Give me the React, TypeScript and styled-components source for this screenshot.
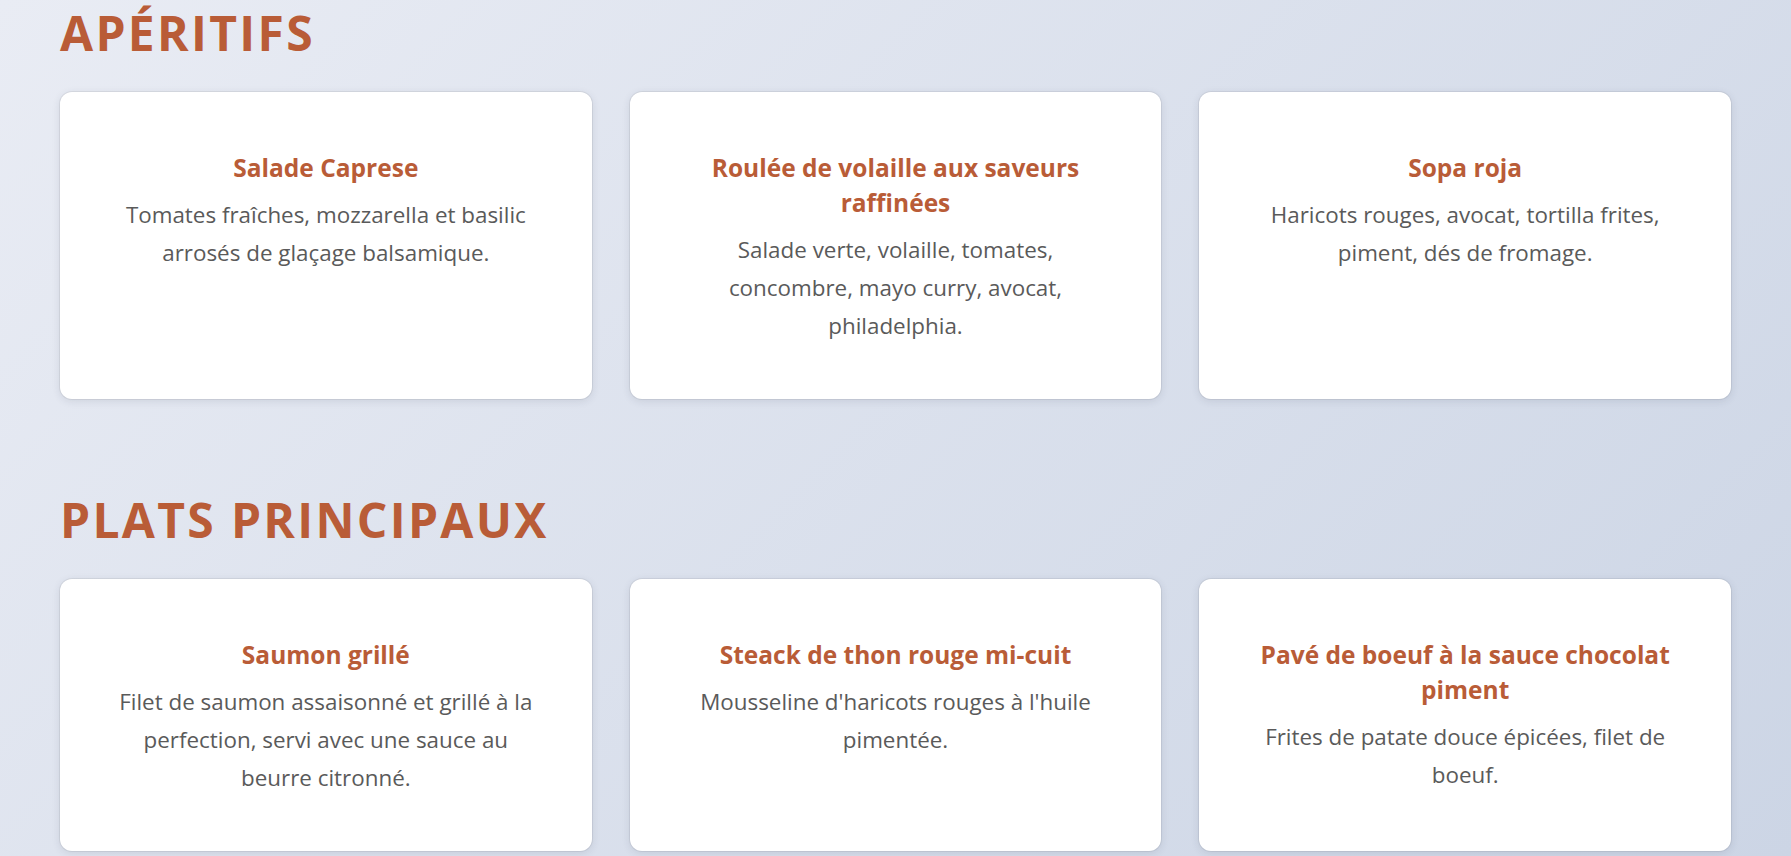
import styled, { createGlobalStyle } from "styled-components";

type Dish = {
    name: string;
    description: string;
};

type Section = {
    title: string;
    dishes: Dish[];
};

const menu: Section[] = [
    {
        title: "Apéritifs",
        dishes: [
            {
                name: "Salade Caprese",
                description: "Tomates fraîches, mozzarella et basilic arrosés de glaçage balsamique.",
            },
            {
                name: "Roulée de volaille aux saveurs raffinées",
                description: "Salade verte, volaille, tomates, concombre, mayo curry, avocat, philadelphia.",
            },
            {
                name: "Sopa roja",
                description: "Haricots rouges, avocat, tortilla frites, piment, dés de fromage.",
            },
        ],
    },
    {
        title: "Plats principaux",
        dishes: [
            {
                name: "Saumon grillé",
                description:
                    "Filet de saumon assaisonné et grillé à la perfection, servi avec une sauce au beurre citronné.",
            },
            {
                name: "Steack de thon rouge mi-cuit",
                description: "Mousseline d'haricots rouges à l'huile pimentée.",
            },
            {
                name: "Pavé de boeuf à la sauce chocolat piment",
                description: "Frites de patate douce épicées, filet de boeuf.",
            },
        ],
    },
];

const App = () => {
    return (
        <>
            <GlobalStyle />
            <StyledPage>
                {menu.map((section) => (
                    <StyledSection key={section.title}>
                        <StyledHeading>{section.title}</StyledHeading>
                        <StyledGrid>
                            {section.dishes.map((dish) => (
                                <StyledCard key={dish.name}>
                                    <StyledName>{dish.name}</StyledName>
                                    <StyledDescription>{dish.description}</StyledDescription>
                                </StyledCard>
                            ))}
                        </StyledGrid>
                    </StyledSection>
                ))}
            </StyledPage>
        </>
    );
};

const GlobalStyle = createGlobalStyle`
    * {
        box-sizing: border-box;
    }

    html, body {
        margin: 0;
        padding: 0;
    }

    body {
        font-family: "Open Sans", "Noto Sans", sans-serif;
        background: linear-gradient(135deg, #e9ecf4 0%, #ccd5e5 100%) fixed;
        min-height: 100vh;
    }
`;

const StyledPage = styled.main`
    padding: 0 60px 60px;
`;

const StyledSection = styled.section`
    margin-bottom: 88px;
`;

const StyledHeading = styled.h2`
    margin: 0 0 27px;
    font-size: 48px;
    font-weight: 700;
    letter-spacing: 2.3px;
    text-transform: uppercase;
    color: #b95c37;
    line-height: normal;
`;

const StyledGrid = styled.div`
    display: grid;
    grid-template-columns: repeat(3, 1fr);
    gap: 38px;
`;

const StyledCard = styled.article`
    background: #fff;
    border-radius: 12px;
    padding: 58px 50px 54px;
    text-align: center;
    box-shadow: 0 2px 8px rgba(40, 50, 70, 0.12), 0 0 0 1px rgba(0, 0, 0, 0.06);
`;

const StyledName = styled.h3`
    margin: 0 0 11px;
    font-size: 24.5px;
    font-weight: 700;
    line-height: 35px;
    color: #b95c37;
`;

const StyledDescription = styled.p`
    margin: 0;
    font-size: 22.4px;
    line-height: 38px;
    color: #5a5a5a;
`;

export default App;
